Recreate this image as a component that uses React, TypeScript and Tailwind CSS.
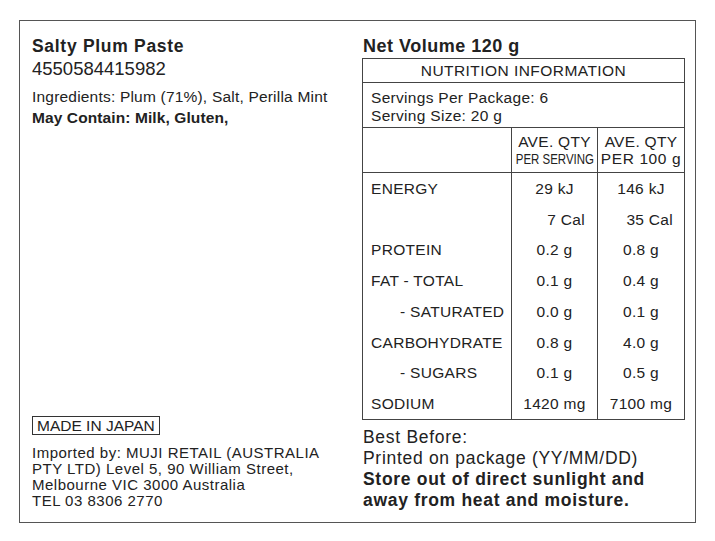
import React from "react";

const rows: { label: string; indent?: boolean; a: string; b: string }[] = [
  { label: "ENERGY", a: "29 kJ", b: "146 kJ" },
  { label: "", a: "7 Cal", b: "35 Cal" },
  { label: "PROTEIN", a: "0.2 g", b: "0.8 g" },
  { label: "FAT - TOTAL", a: "0.1 g", b: "0.4 g" },
  { label: "- SATURATED", indent: true, a: "0.0 g", b: "0.1 g" },
  { label: "CARBOHYDRATE", a: "0.8 g", b: "4.0 g" },
  { label: "- SUGARS", indent: true, a: "0.1 g", b: "0.5 g" },
  { label: "SODIUM", a: "1420 mg", b: "7100 mg" },
];

export default function App() {
  return (
    <div
      className="w-[715px] h-[541px] bg-white pt-[20px] pl-[19px] text-[#222]"
      style={{ fontFamily: '"Liberation Sans", Arial, sans-serif' }}
    >
      <div className="w-[677px] h-[503px] border border-[#555] flex">
        <div className="w-[335px] pl-[12px] pt-[14px] pb-[13px] flex flex-col justify-between">
          <div>
            <div className="text-[17.5px] font-bold leading-[22px] tracking-[0.7px]">Salty Plum Paste</div>
            <div className="text-[18.5px] leading-[22px] mt-[1px]">4550584415982</div>
            <div className="text-[15.5px] leading-[20px] mt-[7px] tracking-[0.2px]">Ingredients: Plum (71%), Salt, Perilla Mint</div>
            <div className="text-[15.5px] leading-[21px] font-bold tracking-[0.1px]">May Contain: Milk, Gluten,</div>
          </div>
          <div>
            <div className="inline-block border border-[#333] text-[15.5px] leading-[17px] px-[4px]">MADE IN JAPAN</div>
            <div className="text-[15px] leading-[16px] mt-[7px] tracking-[0.5px]">
              <div>Imported by: MUJI RETAIL (AUSTRALIA</div>
              <div>PTY LTD) Level 5, 90 William Street,</div>
              <div>Melbourne VIC 3000 Australia</div>
              <div>TEL 03 8306 2770</div>
            </div>
          </div>
        </div>
        <div className="flex-1 pl-[7px] pr-[10px] pt-[13px]">
          <div className="text-[18px] font-bold leading-[24px] pl-[1px] tracking-[0.5px]">Net Volume 120 g</div>
          <div className="border border-[#444] text-[15.5px] tracking-[0.3px]">
            <div className="h-[24px] flex items-center justify-center border-b border-[#444] leading-none tracking-[0.45px]">
              NUTRITION INFORMATION
            </div>
            <div className="h-[45px] border-b border-[#444] pl-[8px] pt-[6px] leading-[18px]">
              <div>Servings Per Package: 6</div>
              <div>Serving Size: 20 g</div>
            </div>
            <div className="grid grid-cols-[149px_86px_1fr] h-[45px] border-b border-[#444]">
              <div className="border-r border-[#444]"></div>
              <div className="border-r border-[#444] flex flex-col items-center pt-[5px] leading-[17px] overflow-hidden">
                <div>AVE. QTY</div>
                <div className="whitespace-nowrap scale-x-[0.74] tracking-normal">PER SERVING</div>
              </div>
              <div className="flex flex-col items-center pt-[5px] leading-[17px]">
                <div>AVE. QTY</div>
                <div className="tracking-[0.6px]">PER 100 g</div>
              </div>
            </div>
            <div className="grid grid-cols-[149px_86px_1fr]">
              <div className="border-r border-[#444] flex flex-col">
                {rows.map((r, i) => (
                  <div key={i} className={"h-[30.75px] flex items-center " + (r.indent ? "pl-[37px]" : "pl-[8px]")}>
                    {r.label}
                  </div>
                ))}
              </div>
              <div className="border-r border-[#444] flex flex-col">
                {rows.map((r, i) => (
                  <div key={i} className={"h-[30.75px] flex items-center " + (i === 1 ? "justify-end pr-[12px]" : "justify-center")}>
                    {r.a}
                  </div>
                ))}
              </div>
              <div className="flex flex-col">
                {rows.map((r, i) => (
                  <div key={i} className={"h-[30.75px] flex items-center " + (i === 1 ? "justify-end pr-[11px]" : "justify-center")}>
                    {r.b}
                  </div>
                ))}
              </div>
            </div>
          </div>
          <div className="pl-[1px] pt-[7px] text-[17.5px] leading-[21px] tracking-[0.7px]">
            <div>Best Before:</div>
            <div>Printed on package (YY/MM/DD)</div>
            <div className="font-bold">Store out of direct sunlight and</div>
            <div className="font-bold">away from heat and moisture.</div>
          </div>
        </div>
      </div>
    </div>
  );
}
